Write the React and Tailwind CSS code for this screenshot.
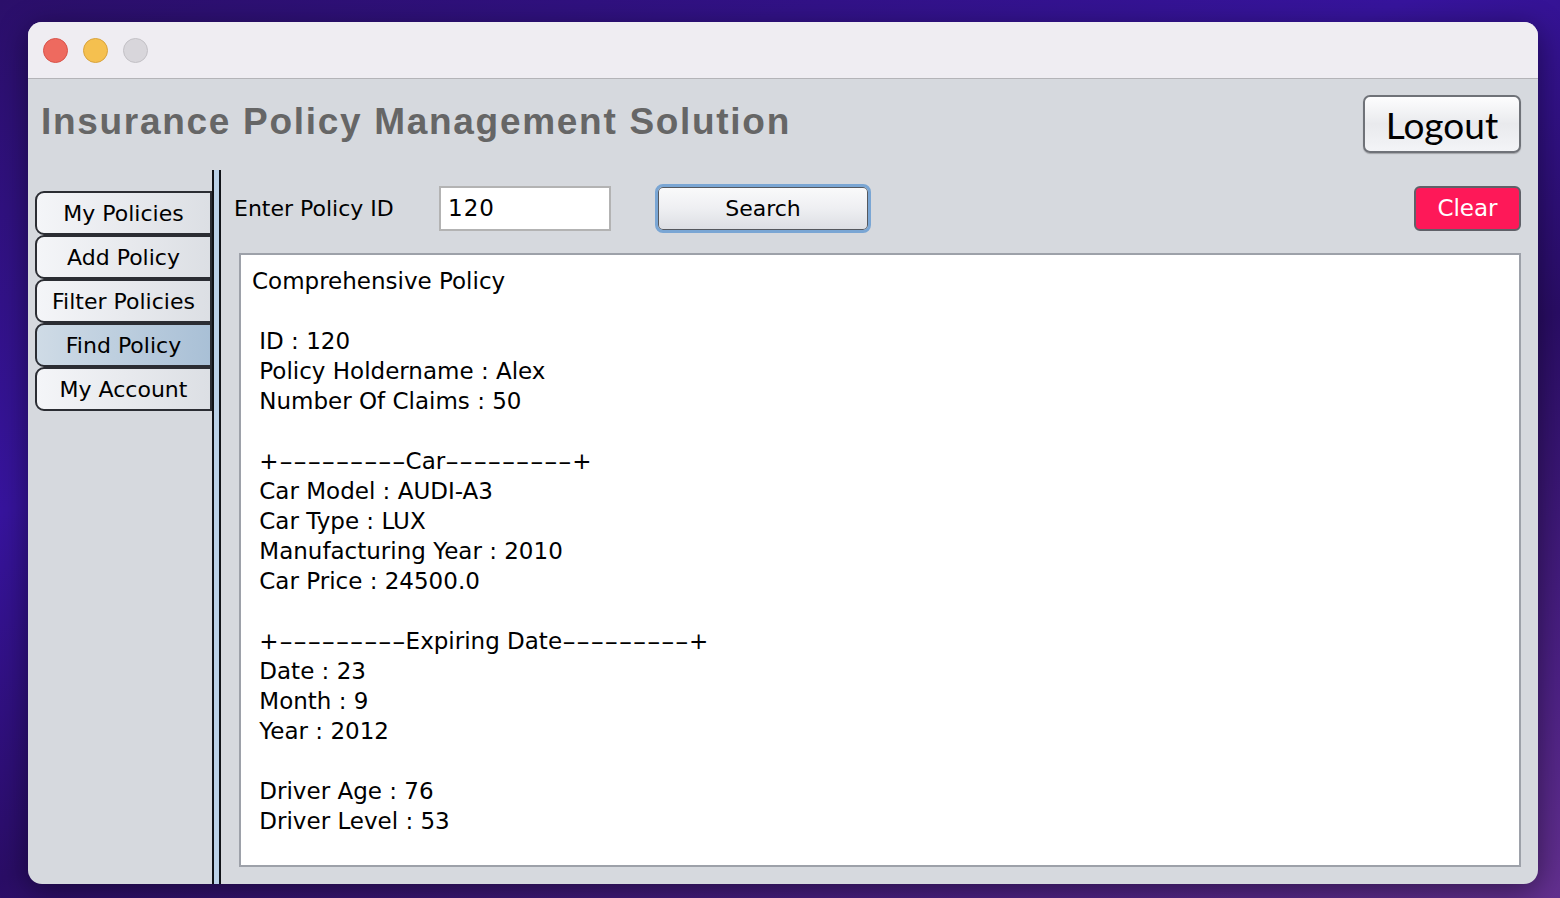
const lucida = { fontFamily: '"DejaVu Sans", Verdana, sans-serif' };

const navItems = ["My Policies", "Add Policy", "Filter Policies", "Find Policy", "My Account"];

const resultLines = [
  "Comprehensive Policy",
  "",
  " ID : 120",
  " Policy Holdername : Alex",
  " Number Of Claims : 50",
  "",
  " +---------Car---------+",
  " Car Model : AUDI-A3",
  " Car Type : LUX",
  " Manufacturing Year : 2010",
  " Car Price : 24500.0",
  "",
  " +---------Expiring Date---------+",
  " Date : 23",
  " Month : 9",
  " Year : 2012",
  "",
  " Driver Age : 76",
  " Driver Level : 53",
];

// the hyphens in the original font are much wider, so stretch dash runs
function ResultLine({ text }) {
  const parts = text.split(/(-{2,})/);
  return (
    <div className="h-[30px]">
      {parts.map((p, i) =>
        /^-{2,}$/.test(p) ? (
          <span key={i} className="inline-block w-[127px]">
            <span className="inline-block origin-left scale-x-[1.7]">{p}</span>
          </span>
        ) : (
          <span key={i}>{p}</span>
        )
      )}
    </div>
  );
}

function NavButton({ label, active }) {
  return (
    <button
      className={`flex h-[44px] w-[178px] items-center justify-center rounded-l-[9px] border-2 border-r-[3px] border-[#2b2d33] pt-[2px] text-[22px] leading-none text-black ${
        active
          ? "bg-gradient-to-r from-[#cfdbe6] to-[#a9c0d6]"
          : "bg-gradient-to-r from-[#f4f5f8] via-[#e8eaee] to-[#dcdfe4]"
      }`}
      style={lucida}
    >
      {label}
    </button>
  );
}

export default function App() {
  return (
    <div className="h-[898px] w-[1560px] overflow-hidden bg-[linear-gradient(160deg,#2b0f6a_0%,#37149e_35%,#2a0d66_60%,#4d2185_85%,#63308f_100%)] pl-[28px] pt-[22px]">
      <div className="flex h-[862px] w-[1510px] flex-col overflow-hidden rounded-[14px] bg-[#d6d9de] shadow-[0_6px_30px_rgba(0,0,0,0.45)]">
        {/* title bar */}
        <div className="flex h-[57px] shrink-0 items-center gap-[15px] border-b border-[#b4b4b8] bg-[#efedf2] pl-[15px]">
          <span className="h-[25px] w-[25px] rounded-full border border-[#d9534a] bg-[#ee6a5f]" />
          <span className="h-[25px] w-[25px] rounded-full border border-[#d9a33c] bg-[#f5c04f]" />
          <span className="h-[25px] w-[25px] rounded-full border border-[#c3c1c6] bg-[#d8d6db]" />
        </div>

        {/* header */}
        <div className="flex h-[74px] shrink-0 items-start justify-between pl-[13px] pr-[17px] pt-[16px]">
          <h1
            className="mt-[8px] text-[37px] font-bold leading-none tracking-[1.7px] text-[#666666]"
            style={{ fontFamily: '"Liberation Sans", Arial, sans-serif' }}
          >
            Insurance Policy Management Solution
          </h1>
          <button
            className="flex h-[58px] w-[158px] items-center justify-center rounded-[7px] border-2 border-[#6f7278] bg-gradient-to-b from-[#fdfdfe] via-[#e9eaed] to-[#f3f4f7] text-[37px] leading-none text-black shadow-[0_1px_1px_rgba(0,0,0,0.25)]"
            style={{ fontFamily: 'Lato, "Open Sans", sans-serif' }}
          >
            Logout
          </button>
        </div>

        {/* body */}
        <div className="mt-[17px] flex min-h-0 flex-1">
          <div className="flex w-[184px] shrink-0 flex-col pl-[7px] pt-[21px]">
            {navItems.map((item) => (
              <NavButton key={item} label={item} active={item === "Find Policy"} />
            ))}
          </div>

          <div className="w-[9px] shrink-0 border-x-2 border-[#111318] bg-[#bcd2e8]" />

          <div className="flex min-w-0 flex-1 flex-col pb-[17px] pl-[13px] pr-[17px] pt-[14px]">
            <div className="flex h-[49px] shrink-0 items-center">
              <span className="w-[164px] whitespace-nowrap text-[22px] leading-none text-black" style={lucida}>
                Enter Policy ID
              </span>
              <div
                className="ml-[41px] flex h-[45px] w-[172px] items-center border-2 border-[#b3b3b3] bg-white pl-[7px] text-[23px] leading-none tracking-[1px] text-black"
                style={lucida}
              >
                120
              </div>
              <button
                className="ml-[44px] flex h-[49px] w-[216px] items-center justify-center rounded-[8px] border-[3px] border-[#7aa6d4] bg-gradient-to-b from-[#fafafb] via-[#eeeff2] to-[#dcdee3] text-[22px] leading-none text-black shadow-[inset_0_0_0_1px_#55585e]"
                style={lucida}
              >
                Search
              </button>
              <button
                className="ml-auto flex h-[45px] w-[107px] items-center justify-center rounded-[6px] border-2 border-[#5f6168] bg-[#fe1858] text-[23px] leading-none text-white"
                style={lucida}
              >
                Clear
              </button>
            </div>

            <div className="ml-[5px] mt-[20px] min-h-0 flex-1 border-2 border-[#9da1a9] bg-white pl-[11px] pt-[11px]">
              <div className="whitespace-pre text-[23px] leading-[30px] text-black" style={lucida}>
                {resultLines.map((line, i) => (
                  <ResultLine key={i} text={line} />
                ))}
              </div>
            </div>
          </div>
        </div>
      </div>
    </div>
  );
}
